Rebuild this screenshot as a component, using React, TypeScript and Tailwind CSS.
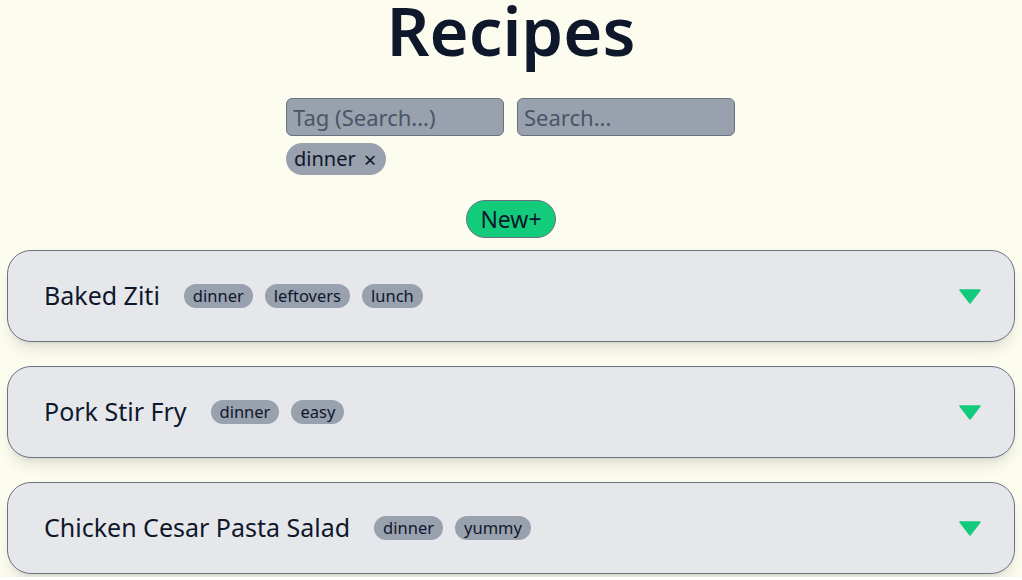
const recipes = [
  { name: "Baked Ziti", tags: ["dinner", "leftovers", "lunch"] },
  { name: "Pork Stir Fry", tags: ["dinner", "easy"] },
  { name: "Chicken Cesar Pasta Salad", tags: ["dinner", "yummy"] },
];

function RecipeCard({ name, tags }: { name: string; tags: string[] }) {
  return (
    <div className="flex items-center h-[92px] pl-[36px] pr-[33px] bg-gray-200 border border-gray-500 rounded-3xl shadow-lg">
      <h2 className="text-[25px] text-slate-900 mr-[24px]">{name}</h2>
      <div className="flex gap-3">
        {tags.map((t) => (
          <span
            key={t}
            className="px-[9px] h-[24px] leading-[24px] rounded-full bg-gray-400 text-slate-900 text-[16.5px]"
          >
            {t}
          </span>
        ))}
      </div>
      <svg className="ml-auto w-[22px] h-[15px]" viewBox="0 0 22 15">
        <path d="M1 1h20L11 14z" fill="#12cc7b" strokeLinejoin="round" stroke="#12cc7b" strokeWidth="1.5" />
      </svg>
    </div>
  );
}

export default function App() {
  return (
    <div className="min-h-screen bg-[#fcfcef] font-['Noto_Sans',sans-serif] text-slate-900 px-[7px]">
      <h1 className="text-center text-[67px] font-semibold leading-none -mt-[3px]">Recipes</h1>

      <div className="w-[450px] mx-auto mt-[34px]">
        <div className="flex gap-[13px]">
          <input
            placeholder="Tag (Search...)"
            className="w-[218px] h-[38px] px-[6px] bg-gray-400 border border-gray-500 rounded-md text-[22px] placeholder:text-gray-600 outline-none"
          />
          <input
            placeholder="Search..."
            className="w-[218px] h-[38px] px-[6px] bg-gray-400 border border-gray-500 rounded-md text-[22px] placeholder:text-gray-600 outline-none"
          />
        </div>
        <div className="flex mt-[7px]">
          <span className="flex items-center gap-[8px] h-[32px] pl-[8px] pr-[10px] rounded-full bg-gray-400 text-[20px]">
            dinner <span className="text-[22px] leading-none">×</span>
          </span>
        </div>
      </div>

      <div className="flex justify-center mt-[25px]">
        <button className="h-[38px] px-[13px] rounded-full bg-[#12cc7b] border border-gray-500 text-[23px] leading-none">
          New+
        </button>
      </div>

      <div className="flex flex-col gap-[24px] mt-[12px]">
        {recipes.map((r) => (
          <RecipeCard key={r.name} name={r.name} tags={r.tags} />
        ))}
      </div>
    </div>
  );
}
